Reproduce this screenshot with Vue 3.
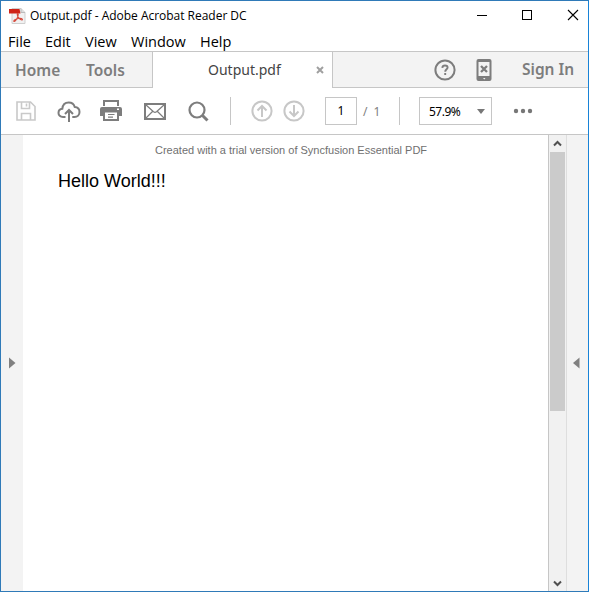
<script setup>
const menus = [
  { label: 'File', width: 37 },
  { label: 'Edit', width: 40 },
  { label: 'View', width: 46 },
  { label: 'Window', width: 69 },
  { label: 'Help', width: 40 },
]
</script>

<template>
  <div class="window">
    <header class="titlebar">
      <svg class="app-icon" width="17" height="17" viewBox="0 0 17 17">
        <path d="M3 .5h9l4 4v11H3z" fill="#f1f1f1" stroke="#cfcfcf" />
        <path d="M12 .5v4h4" fill="#ddd" stroke="#bbb" />
        <path d="M0 1h10.5l1 4.500H0z" fill="#cf2418" />
        <path d="M8.500 5.500c1.200 0 .7 2.500-.2 4.300-.9 1.900-2.300 4-3.300 3.700-1.200-.8 2.200-2.700 4.500-3 2-.4 4.300.2 3.900 1.200-.7 1-3.500-1-4.500-3-.6-1.500-.9-3-.4-3.200z" fill="none" stroke="#d64a3d" stroke-width="1.100" />
      </svg>
      <span class="title">Output.pdf - Adobe Acrobat Reader DC</span>
      <svg class="controls" width="104" height="12" viewBox="0 0 104 12" fill="none" stroke="#000">
        <path d="M0 6.500h10M45.500 1.500h9v9h-9z" shape-rendering="crispEdges" />
        <path d="M91 1l10 10M101 1L91 11" stroke-width="1.100" />
      </svg>
    </header>
    <nav class="menubar">
      <span v-for="m in menus" :key="m.label" :style="{ width: m.width + 'px' }">{{ m.label }}</span>
    </nav>
    <div class="tabs">
      <div class="tabs-left"><span class="home">Home</span><span class="tools">Tools</span></div>
      <div class="tab">
        <span class="tab-name">Output.pdf</span>
        <svg width="8" height="8" viewBox="0 0 8 8"><path d="M1 1l6 6M7 1L1 7" stroke="#a0a0a0" stroke-width="2" /></svg>
      </div>
      <div class="tabs-right">
        <svg class="help" width="22" height="22" viewBox="0 0 22 22" fill="none" stroke="#7d7d7d">
          <circle cx="11" cy="11" r="9.600" stroke-width="2" />
          <path d="M8.300 8.800C8.500 7 9.500 6.500 11 6.500c1.600 0 2.600.8 2.600 2 0 1.700-2.400 1.800-2.400 4.200M11.200 14v2" stroke-width="1.900" />
        </svg>
        <svg class="phone" width="16" height="22" viewBox="0 0 16 22">
          <rect x=".5" width="15" height="22" rx="2" fill="#7d7d7d" />
          <path d="M2.500 3h11v14h-11z" fill="#f3f3f3" />
          <path d="M5 7l6 6M11 7l-6 6" stroke="#7d7d7d" stroke-width="2.300" />
          <path d="M7 19h2.500l-1.200 1.500z" fill="#f3f3f3" />
        </svg>
        <span class="sign">Sign In</span>
      </div>
    </div>
    <div class="toolbar">
      <svg class="save" width="20" height="20" viewBox="0 0 20 20" fill="none" stroke="#c9c9c9" stroke-width="1.600">
        <path d="M1 1h13.500L19 5.500V19H1zM5.500 1v6.500h8V1M10.500 2.500v3M5.500 19v-6.500h9V19" />
      </svg>
      <svg class="cloud" width="24" height="22" viewBox="0 0 24 22" fill="none" stroke="#7d7d7d" stroke-width="2">
        <path d="M8.500 16H6c-2.800 0-4.500-1.700-4.500-4.100C1.500 9.600 3.100 8 5.300 7.800 5.700 4 8.200 1.500 11.700 1.500c3 0 5.300 1.700 6 4.400 2.900.2 4.800 2.200 4.800 5 0 3-2 5.100-5 5.100h-2.200" />
        <path d="M12 21V9.500M8 13l4-4 4 4" />
      </svg>
      <svg class="print" width="22" height="21" viewBox="0 0 22 21">
        <path d="M4 6V1h14v5" fill="#fff" stroke="#7d7d7d" stroke-width="2" />
        <path d="M2 7h18q2 0 2 2v7h-4v-4H4v4H0V9q0-2 2-2z" fill="#7d7d7d" />
        <path d="M4 11.500h14V20H4z" fill="#fff" stroke="#7d7d7d" stroke-width="2" />
        <path d="M8 14.500h6.500M8 17.200h5" stroke="#7d7d7d" stroke-width="1.200" />
        <path d="M17 8.500h2v1.500h-2z" fill="#fff" />
      </svg>
      <svg class="mail" width="22" height="17" viewBox="0 0 22 17" fill="none" stroke="#7d7d7d">
        <path d="M1 1h20v15H1z" stroke-width="2" />
        <path d="M1.500 1.500l8 7.300q1.500 1 3 0l8-7.300M1.500 15.500l7-7M20.500 15.500l-7-7" stroke-width="1.200" />
      </svg>
      <svg class="search" width="21" height="21" viewBox="0 0 21 21" fill="none" stroke="#7d7d7d">
        <circle cx="9" cy="9" r="7.500" stroke-width="2.200" />
        <path d="M14.500 14.500l5 5" stroke-width="3" />
      </svg>
      <i class="divider d1"></i>
      <svg class="up" width="22" height="22" viewBox="0 0 22 22" fill="none" stroke="#c7c7c7" stroke-width="2">
        <circle cx="11" cy="11" r="9.600" /><path d="M11 17V6M6.500 10.500L11 6l4.500 4.500" />
      </svg>
      <svg class="down" width="22" height="22" viewBox="0 0 22 22" fill="none" stroke="#c7c7c7" stroke-width="2">
        <circle cx="11" cy="11" r="9.600" /><path d="M11 5v11M6.500 11.500L11 16l4.500-4.500" />
      </svg>
      <div class="page-box">1</div>
      <span class="total">/<b>1</b></span>
      <i class="divider d2"></i>
      <div class="zoom">
        <span>57.9%</span>
        <svg width="8" height="5" viewBox="0 0 8 5"><path d="M0 0h8L4 5z" fill="#777" /></svg>
      </div>
      <svg class="more" width="20" height="6" viewBox="0 0 20 6" fill="#777">
        <circle cx="3" cy="3" r="2.200" /><circle cx="10" cy="3" r="2.200" /><circle cx="17" cy="3" r="2.200" />
      </svg>
    </div>
    <main class="content">
      <aside class="left"><svg width="7" height="12" viewBox="0 0 7 12"><path d="M0 .5v11L6.500 6z" fill="#808080" /></svg></aside>
      <article class="page">
        <p class="trial"><span>Created with a trial version of Syncfusion Essential PDF</span></p>
        <p class="hello"><span>Hello World!!!</span></p>
      </article>
      <div class="scroll">
        <svg width="9" height="7" viewBox="0 0 9 7"><path d="M1 5.500L4.500 2 8 5.500" fill="none" stroke="#505050" stroke-width="2" /></svg>
        <div class="thumb"></div>
        <svg class="bottom" width="9" height="7" viewBox="0 0 9 7"><path d="M1 1.500L4.500 5 8 1.500" fill="none" stroke="#505050" stroke-width="2" /></svg>
      </div>
      <aside class="right"><svg width="7" height="12" viewBox="0 0 7 12"><path d="M6.500.5v11L0 6z" fill="#808080" /></svg></aside>
    </main>
  </div>
</template>

<style>
body { margin: 0; overflow: hidden; }
</style>
<style scoped>
* { box-sizing: border-box; }
svg { display: block; flex: none; }
span { white-space: nowrap; flex: none; }
.window { width: 589px; height: 592px; border: 1px solid #2f7ab8; border-right-color: #1883d7; background: #fff; display: flex; flex-direction: column; font-family: "Noto Sans", "Open Sans", sans-serif; color: #000; }
.titlebar { height: 30px; display: flex; align-items: center; padding-left: 8px; flex: none; }
.title { width: 209px; margin-left: 4px; font: 12px/16px "Open Sans", sans-serif; letter-spacing: -.02px; }
.controls { margin-left: 238px; margin-top: -2px; }
.menubar { height: 20px; display: flex; padding-left: 7px; flex: none; font: 14.5px/21px "Open Sans", sans-serif; }
.tabs { height: 37px; display: flex; flex: none; border-top: 1px solid #c6c6c6; }
.tabs-left { width: 152px; background: #f3f3f3; border-right: 1px solid #c6c6c6; border-bottom: 1px solid #c6c6c6; display: flex; padding-left: 14px; font: 600 15.5px/36px "Noto Sans", sans-serif; color: #7d7d7d; }
.home { width: 71px; }
.tab { width: 179px; display: flex; align-items: center; padding-left: 55px; font-size: 14px; line-height: 36px; color: #444; }
.tab-name { width: 108px; }
.tabs-right { flex: 1; background: #f3f3f3; border-left: 1px solid #c6c6c6; border-bottom: 1px solid #c6c6c6; display: flex; align-items: center; font: 600 15.5px/35px "Noto Sans", sans-serif; color: #7d7d7d; }
.help { margin-left: 101px; }
.phone { margin-left: 20px; }
.sign { margin-left: 30px; }
.toolbar { height: 47px; display: flex; align-items: center; flex: none; border-bottom: 1px solid #c6c6c6; padding-left: 15px; }
.cloud { margin-left: 21px; margin-top: 2px; }
.print { margin-left: 19px; margin-top: -1px; }
.mail { margin-left: 22px; }
.search { margin-left: 22px; }
.divider { width: 1px; height: 28px; background: #c6c6c6; flex: none; }
.d1 { margin-left: 21px; }
.up { margin-left: 20px; }
.down { margin-left: 10px; }
.page-box { width: 32px; height: 28px; border: 1px solid #c6c6c6; margin-left: 20px; font-size: 12px; line-height: 26px; text-align: center; flex: none; }
.total { margin-left: 6px; width: 30px; font-size: 12px; color: #808080; }
.total b { font-weight: 400; margin-left: 6px; }
.d2 { margin-left: 6px; }
.zoom { width: 73px; height: 28px; border: 1px solid #c6c6c6; margin-left: 19px; display: flex; align-items: center; padding-left: 9px; font-size: 12px; flex: none; }
.zoom span { width: 48px; letter-spacing: -.5px; }
.more { margin-left: 21px; }
.content { flex: 1; display: flex; min-height: 0; }
.left { width: 22px; background: #f3f3f3; display: flex; align-items: center; padding-left: 8px; flex: none; }
.page { width: 525px; font-family: "Liberation Sans", sans-serif; }
.page p { margin: 0; }
.trial { padding: 8px 0 0 132px; font-size: 11px; line-height: 15px; color: #707070; }
.hello { padding: 12px 0 0 35px; font-size: 18px; line-height: 22px; }
.scroll { width: 19px; border-left: 1px solid #c6c6c6; border-right: 1px solid #dedede; background: #f1f1f1; display: flex; flex-direction: column; align-items: center; padding: 5px 0 4px; flex: none; }
.thumb { width: 15px; height: 259px; background: #cbcbcb; margin-top: 5px; flex: none; }
.bottom { margin-top: auto; }
.right { flex: 1; background: #f3f3f3; display: flex; align-items: center; padding-left: 6px; }
</style>
